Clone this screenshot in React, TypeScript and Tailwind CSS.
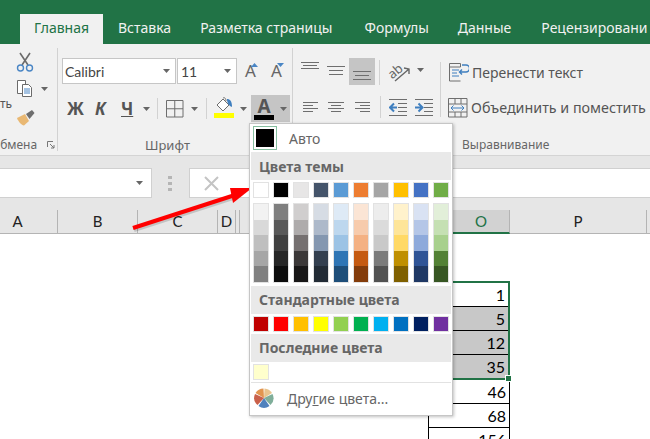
const UI = "font-['Noto_Sans',sans-serif]";

const theme = ["#ffffff", "#000000", "#e7e6e6", "#44546a", "#5b9bd5", "#ed7d31", "#a5a5a5", "#ffc000", "#4472c4", "#70ad47"];
const shades = [
  ["#f2f2f2", "#d9d9d9", "#bfbfbf", "#a6a6a6", "#808080"],
  ["#7f7f7f", "#595959", "#404040", "#262626", "#0d0d0d"],
  ["#d0cece", "#aeabab", "#757070", "#3b3838", "#181717"],
  ["#d6dce4", "#adb9ca", "#8497b0", "#333f4f", "#222b35"],
  ["#deeaf6", "#bdd7ee", "#9cc3e5", "#2e75b5", "#1e4e79"],
  ["#fbe5d5", "#f7cbac", "#f4b183", "#c55a11", "#833c0b"],
  ["#ededed", "#dbdbdb", "#c9c9c9", "#7b7b7b", "#525252"],
  ["#fff2cc", "#fee599", "#ffd966", "#bf8f00", "#7f6000"],
  ["#d9e2f3", "#b4c6e7", "#8eaadb", "#2f5496", "#1f3864"],
  ["#e2efd9", "#c5e0b3", "#a8d08d", "#538135", "#375623"],
];
const standard = ["#c00000", "#ff0000", "#ffc000", "#ffff00", "#92d050", "#00b050", "#00b0f0", "#0070c0", "#002060", "#7030a0"];

function Caret({ className = "" }: { className?: string }) {
  return (
    <svg width="7" height="4" viewBox="0 0 7 4" className={`shrink-0 ${className}`}>
      <path d="M0 0h7L3.5 4z" fill="#666" />
    </svg>
  );
}

function Sep({ className = "" }: { className?: string }) {
  return <div className={`w-px shrink-0 bg-[#d2d2d2] ${className}`} />;
}

// lines for the alignment buttons: [y, x, length]
function Lines({ w, rows, className = "" }: { w: number; rows: [number, number, number][]; className?: string }) {
  const h = Math.max(...rows.map((r) => r[0])) + 1;
  return (
    <svg width={w} height={h} className={`shrink-0 ${className}`}>
      {rows.map(([y, x, l], i) => (
        <rect key={i} x={x} y={y} width={l} height="1" fill="#6e6e6e" />
      ))}
    </svg>
  );
}

function Tabs() {
  return (
    <div className={`flex h-[44px] items-end overflow-hidden bg-[#217346] pl-[20px] text-[14px] text-[#f1f1f1] ${UI}`}>
      <div className="flex h-[30px] w-[83px] shrink-0 items-center justify-center bg-[#f1f1f1] pb-[3px] text-[#217346]">Главная</div>
      <div className="flex h-[30px] items-center whitespace-nowrap pb-[3px]">
        <span className="ml-[15px]">Вставка</span>
        <span className="ml-[29px]">Разметка страницы</span>
        <span className="ml-[32px]">Формулы</span>
        <span className="ml-[29px]">Данные</span>
        <span className="ml-[30px]">Рецензировани</span>
      </div>
    </div>
  );
}

function Clipboard() {
  return (
    <div className="flex h-full w-[57px] shrink-0 flex-col overflow-hidden">
      <div className="ml-[16px] mt-[8px] flex flex-col">
        <svg width="18" height="20" viewBox="0 0 18 20" fill="none">
          <path d="M4 1l8 12M14 1L6 13" stroke="#6b6b6b" strokeWidth="1.6" />
          <circle cx="4.5" cy="16" r="3" stroke="#4a86c5" strokeWidth="1.4" />
          <circle cx="13.5" cy="16" r="3" stroke="#4a86c5" strokeWidth="1.4" />
        </svg>
        <div className="mt-[7px] flex items-center">
          <svg width="18" height="19" viewBox="0 0 18 19" fill="none">
            <path d="M1.5 1.5h8v13h-8z" fill="#fff" stroke="#6b6b6b" />
            <path d="M6.5 5.5h6l3 3v9h-9z" fill="#fff" stroke="#6b6b6b" />
            <path d="M8 10h6M8 12h6M8 14h6" stroke="#4a86c5" />
          </svg>
          <Caret className="ml-[7px]" />
        </div>
        <svg className="mt-[11px]" width="20" height="17" viewBox="0 0 20 17">
          <path d="M1 9l8-4 4 7-5 4.5C5 16 2 12 1 9z" fill="#e9b873" />
          <path d="M10 5l6-4 2.5 3-5 6z" fill="#6e6e6e" />
        </svg>
      </div>
      <span className={`mt-[-29px] text-[12px] leading-[14px] text-[#555] ${UI}`}>ть</span>
      <div className="mt-auto mb-[2px] flex items-center">
        <span className={`ml-[-7px] text-[12px] leading-[16px] text-[#666] ${UI}`}>обмена</span>
        <svg className="ml-[10px]" width="8" height="8" viewBox="0 0 8 8" fill="none" stroke="#777">
          <path d="M.5 6V.5H6M3 3l4 4M7 4v3H4" />
        </svg>
      </div>
    </div>
  );
}

function FontGroup() {
  return (
    <div className="flex h-full w-[234px] shrink-0 flex-col pl-[4px]">
      <div className="mt-[14px] flex h-[26px] items-center">
        <div className="flex h-full w-[114px] items-center border border-[#c6c6c6] bg-white pl-[2px] pr-[5px] font-['Lato',sans-serif] text-[14px] text-[#444]">
          Calibri
          <Caret className="ml-auto" />
        </div>
        <div className="ml-px flex h-full w-[60px] items-center border border-[#c6c6c6] bg-white pl-[3px] pr-[5px] font-['Lato',sans-serif] text-[14px] text-[#444]">
          11
          <Caret className="ml-auto" />
        </div>
        <div className={`ml-[8px] flex h-[26px] w-[19px] items-start text-[17px] leading-[26px] text-[#666] ${UI}`}>
          A
          <svg className="ml-[-5px] mt-[5px]" width="7" height="4" viewBox="0 0 7 4">
            <path d="M0 4l3.500-4L7 4z" fill="#4a86c5" />
          </svg>
        </div>
        <div className={`ml-[7px] flex h-[26px] w-[19px] items-start text-[17px] leading-[26px] text-[#666] ${UI}`}>
          A
          <svg className="ml-[-5px] mt-[5px]" width="7" height="4" viewBox="0 0 7 4">
            <path d="M0 0l3.500 4L7 0z" fill="#4a86c5" />
          </svg>
        </div>
      </div>
      <div className="mt-[11px] flex h-[27px] items-center">
        <span className={`ml-[5px] w-[28px] text-[17px] font-bold text-[#555] ${UI}`}>Ж</span>
        <span className={`w-[26px] text-[17px] font-bold italic text-[#555] ${UI}`}>К</span>
        <span className={`w-[21px] text-[17px] font-bold text-[#555] underline ${UI}`}>Ч</span>
        <Caret className="ml-[1px]" />
        <Sep className="ml-[7px] h-[21px]" />
        <svg className="ml-[8px]" width="18" height="18" viewBox="0 0 18 18" fill="none" stroke="#6e6e6e">
          <path d="M.5.5h16.500v16.500H.5zM8.750.5v16.500M.5 8.750h16.500" />
        </svg>
        <Caret className="ml-[7px]" />
        <Sep className="ml-[8px] h-[21px]" />
        <div className="ml-[7px] mb-[2px] flex w-[20px] flex-col items-center">
          <svg width="20" height="16" viewBox="0 0 20 16" fill="none">
            <path d="M3 8l6-6 6 6-6 6z" fill="#fff" stroke="#6e6e6e" />
            <path d="M9 1c2-1 3 1 3 3" stroke="#6e6e6e" />
            <path d="M13 2c3 0 5 2 5 8-3-1-5-4-5-8z" fill="#3f7fbf" />
          </svg>
          <div className="h-[5px] w-[20px] bg-[#ffff00]" />
        </div>
        <Caret className="ml-[6px]" />
        <div className="ml-[4px] flex h-[27px] w-[39px] items-center bg-[#c5c5c5] pl-[3px]">
          <div className="flex w-[20px] flex-col items-center">
            <span className={`text-[19px] leading-[17px] font-bold text-[#555] ${UI}`}>A</span>
            <div className="h-[5px] w-[20px] bg-black" />
          </div>
          <Caret className="ml-[6px]" />
        </div>
      </div>
      <div className={`mt-[14px] pl-[83px] text-[13px] leading-[18px] text-[#666] ${UI}`}>Шрифт</div>
    </div>
  );
}

function AlignGroup() {
  return (
    <div className="flex h-full min-w-0 flex-1 flex-col">
      <div className="mt-[14px] flex h-[73px]">
        <div className="flex w-[147px] shrink-0 flex-col">
          <div className="flex h-[27px] items-start">
            <Lines className="ml-[8px] mt-[4px]" w={18} rows={[[0, 0, 18], [3, 2, 14], [6, 0, 18]]} />
            <Lines className="ml-[8px] mt-[8px]" w={18} rows={[[0, 0, 18], [4, 2, 14], [8, 2, 14]]} />
            <div className="ml-[4px] flex h-[27px] w-[26px] items-end justify-center bg-[#c5c5c5] pb-[5px]">
              <Lines w={18} rows={[[0, 0, 18], [4, 2, 14], [8, 0, 18]]} />
            </div>
            <Sep className="ml-[4px] mt-[2px] h-[25px]" />
            <svg className="ml-[7px] mt-[2px] overflow-visible" width="26" height="24" viewBox="0 0 26 24" fill="none">
              <text x="1" y="16" transform="rotate(-40 8 12)" fontFamily="Noto Sans" fontSize="13" fill="#666">ab</text>
              <path d="M8 21L22 9M17 8l5 1v5" stroke="#666" strokeWidth="1.4" />
            </svg>
            <Caret className="ml-[4px] mt-[10px]" />
          </div>
          <div className="mt-[11px] flex h-[22px] items-start">
            <Lines className="ml-[10px] mt-[6px]" w={15} rows={[[0, 0, 15], [3, 0, 10], [6, 0, 15], [9, 0, 10]]} />
            <Lines className="ml-[10px] mt-[6px]" w={16} rows={[[0, 0, 16], [3, 3, 10], [6, 0, 16], [9, 3, 10]]} />
            <Lines className="ml-[11px] mt-[6px]" w={15} rows={[[0, 0, 15], [3, 5, 10], [6, 0, 15], [9, 5, 10]]} />
            <Sep className="ml-[10px] h-[22px]" />
            <svg className="ml-[8px] mt-[3px]" width="18" height="17" viewBox="0 0 18 17" fill="none">
              <path d="M0 .5h18M9 4.500h9M9 8.500h9M9 12.500h9M0 16.500h18" stroke="#6e6e6e" />
              <path d="M8 8.500H2M5 4.500l-4 4 4 4" stroke="#3f7fbf" strokeWidth="2" />
            </svg>
            <svg className="ml-[8px] mt-[3px]" width="18" height="17" viewBox="0 0 18 17" fill="none">
              <path d="M0 .5h18M9 4.500h9M9 8.500h9M9 12.500h9M0 16.500h18" stroke="#6e6e6e" />
              <path d="M0 8.500h6M3.500 4.500l4 4-4 4" stroke="#3f7fbf" strokeWidth="2" />
            </svg>
          </div>
        </div>
        <Sep className="mt-[4px] h-[55px]" />
        <div className={`flex flex-col whitespace-nowrap text-[14px] text-[#555] ${UI}`}>
          <div className="mt-[4px] flex h-[20px] items-center">
            <svg className="ml-[8px]" width="20" height="19" viewBox="0 0 20 19" fill="none">
              <path d="M.5.500h11v3.500h-11zM.5 4v14h11" stroke="#6e6e6e" />
              <path d="M3 7h7M3 10h5M3 13h7" stroke="#3f7fbf" />
              <path d="M13 2h4a2 2 0 0 1 0 7h-6M13 6.500L10.500 9l2.500 2.500" stroke="#3f7fbf" strokeWidth="1.4" />
            </svg>
            <span className="ml-[3px]">Перенести текст</span>
          </div>
          <div className="mt-[16px] flex h-[20px] items-center">
            <svg className="ml-[7px]" width="20" height="20" viewBox="0 0 20 20" fill="none">
              <path d="M.5.500h18.500v18.500H.5zM.5 6h18.500M.5 14h18.500M7 .500V6M13 .500V6M7 14v5M13 14v5" stroke="#6e6e6e" />
              <path d="M3 10h13M5.500 7.500L3 10l2.500 2.500M13.500 7.500L16 10l-2.500 2.500" stroke="#3f7fbf" />
            </svg>
            <span className="ml-[3px] text-[14.3px]">Объединить и поместить</span>
          </div>
        </div>
      </div>
      <div className={`mt-[5px] pl-[169px] text-[12px] leading-[18px] text-[#666] ${UI}`}>Выравнивание</div>
    </div>
  );
}

function Ribbon() {
  return (
    <div className="flex h-[112px] overflow-hidden border-b border-[#d4d4d4] bg-[#f1f1f1]">
      <Clipboard />
      <Sep className="mt-[4px] h-[103px]" />
      <FontGroup />
      <Sep className="mt-[4px] h-[103px]" />
      <AlignGroup />
    </div>
  );
}

function FormulaBar() {
  return (
    <div className="flex h-[54px] items-start bg-[#e6e6e6] pt-[12px]">
      <div className="flex h-[30px] w-[152px] items-center justify-end border border-l-0 border-[#d0d0d0] bg-white pr-[8px]">
        <Caret />
      </div>
      <div className="ml-[16px] mt-[8px] flex w-[5px] flex-col gap-[3px]">
        <div className="h-[3px] w-[4px] bg-[#b5b5b5]" />
        <div className="h-[3px] w-[4px] bg-[#b5b5b5]" />
        <div className="h-[3px] w-[4px] bg-[#b5b5b5]" />
      </div>
      <div className="ml-[16px] flex h-[30px] flex-1 items-center border-y border-l border-[#d0d0d0] bg-white pl-[14px]">
        <svg width="15" height="15" viewBox="0 0 15 15" stroke="#c4c4c4" strokeWidth="2">
          <path d="M1 1l13 13M14 1L1 14" />
        </svg>
      </div>
    </div>
  );
}

function Headers() {
  const cols: [string, string][] = [
    ["A", "w-[58px] pr-[22px]"],
    ["B", "w-[80px]"],
    ["C", "w-[80px]"],
    ["D", "w-[18px]"],
    ["", "w-[4px]"],
    ["", "w-[213px]"],
  ];
  return (
    <div className="flex h-[24px] bg-[#e6e6e6] font-['Lato',sans-serif] text-[15px] text-[#222]">
      {cols.map(([name, w], i) => (
        <div key={i} className={`flex h-[24px] shrink-0 items-center justify-center border-r border-b border-r-[#b4b4b4] border-b-[#b4b4b4] ${w}`}>
          {name}
        </div>
      ))}
      <div className="flex h-[24px] w-[57px] shrink-0 items-center justify-center border-r border-b-2 border-r-[#b4b4b4] border-b-[#217346] bg-[#d2d2d2] text-[#217346]">O</div>
      <div className="flex h-[24px] w-[137px] shrink-0 items-center justify-center border-r border-b border-r-[#b4b4b4] border-b-[#b4b4b4]">P</div>
      <div className="h-[24px] flex-1 border-b border-[#b4b4b4]" />
    </div>
  );
}

function Cell({ v, fill }: { v: number; fill?: boolean }) {
  return (
    <div className={`flex h-[24px] items-center justify-end border-b border-black pr-[3px] ${fill ? "bg-[#c8c8c8]" : "bg-white"}`}>
      {v}
    </div>
  );
}

function Sheet() {
  return (
    <div className="h-[205px] overflow-hidden bg-white pl-[428px] pt-[47px] font-['Lato',sans-serif] text-[16px] text-black">
      <div className="w-[82px]">
        <div className="relative border-y-2 border-r-2 border-[#217346]">
          <Cell v={1} />
          <Cell v={5} fill />
          <Cell v={12} fill />
          <div className="flex h-[23px] items-center justify-end bg-[#c8c8c8] pr-[3px]">35</div>
          <div className="absolute -bottom-[3px] -right-[3px] h-[5px] w-[5px] bg-[#217346] ring-1 ring-white" />
        </div>
        <div className="w-[82px] border-x border-black">
          <Cell v={46} />
          <Cell v={68} />
          <Cell v={156} />
        </div>
      </div>
    </div>
  );
}

function Heading({ children }: { children: string }) {
  return (
    <div className={`flex h-[28px] items-center bg-[#e9e9e9] pl-[8px] text-[14px] font-bold text-[#666] ${UI}`}>{children}</div>
  );
}

function Swatch({ c }: { c: string }) {
  return <div className="h-[16px] w-[16px] border border-[#e2e2e2]" style={{ backgroundColor: c }} />;
}

function ColorMenu() {
  return (
    <div className="absolute left-[249px] top-[123px] h-[293px] w-[204px] border border-[#c6c6c6] bg-white px-px shadow-[1px_1px_3px_rgba(0,0,0,0.25)]">
      <div className="flex h-[28px] items-center pl-[2px]">
        <div className="flex h-[24px] w-[24px] items-center justify-center border border-[#86bfa0]">
          <div className="h-[18px] w-[18px] bg-black" />
        </div>
        <span className={`ml-[12px] text-[14px] text-[#666] ${UI}`}>Авто</span>
      </div>
      <Heading>Цвета темы</Heading>
      <div className="mt-[2px] flex gap-[4px] pl-[2px]">
        {theme.map((c) => (
          <Swatch key={c} c={c} />
        ))}
      </div>
      <div className="mt-[5px] flex gap-[4px] pl-[2px]">
        {shades.map((col, i) => (
          <div key={i} className="w-[16px] border border-[#e2e2e2]">
            {col.map((c) => (
              <div key={c} className="h-[15.6px]" style={{ backgroundColor: c }} />
            ))}
          </div>
        ))}
      </div>
      <div className="mt-[3px]">
        <Heading>Стандартные цвета</Heading>
      </div>
      <div className="mt-[2px] flex gap-[4px] pl-[2px]">
        {standard.map((c) => (
          <Swatch key={c} c={c} />
        ))}
      </div>
      <div className="mt-[2px]">
        <Heading>Последние цвета</Heading>
      </div>
      <div className="mt-[2px] pl-[2px]">
        <Swatch c="#ffffcc" />
      </div>
      <div className="mt-[2px] h-px bg-[#e2e2e2]" />
      <div className="flex h-[31px] items-center pl-[3px]">
        <svg width="20" height="20" viewBox="0 0 20 20">
          <path d="M10 10L9.500 0.500A9.500 9.500 0 0 0 1.500 5z" fill="#e2954f" />
          <path d="M10 10L10.500 0.500A9.500 9.500 0 0 1 18 5z" fill="#e9c48e" />
          <path d="M10 10L18.500 6A9.500 9.500 0 0 1 16.500 17z" fill="#7fae9a" />
          <path d="M10 10L15.500 18A9.500 9.500 0 0 1 4.500 18z" fill="#4f81bd" />
          <path d="M10 10L3.500 17A9.500 9.500 0 0 1 1 6z" fill="#c9604a" />
        </svg>
        <span className={`ml-[13px] text-[14px] text-[#666] ${UI}`}>
          Дру<span className="underline">г</span>ие цвета...
        </span>
      </div>
    </div>
  );
}

function RedArrow() {
  return (
    <svg className="absolute left-[125px] top-[180px]" width="132" height="56" viewBox="0 0 132 56">
      <path d="M8 48L110 15" stroke="rgba(0,0,0,0.15)" strokeWidth="4" transform="translate(1 2)" />
      <path d="M8 48L110 15" stroke="#ff0000" strokeWidth="4" />
      <path d="M127 8L105 8L108 23z" fill="#ff0000" />
    </svg>
  );
}

export default function App() {
  return (
    <div className="relative h-[439px] w-[650px] overflow-hidden bg-white">
      <Tabs />
      <Ribbon />
      <FormulaBar />
      <Headers />
      <Sheet />
      <RedArrow />
      <ColorMenu />
    </div>
  );
}
